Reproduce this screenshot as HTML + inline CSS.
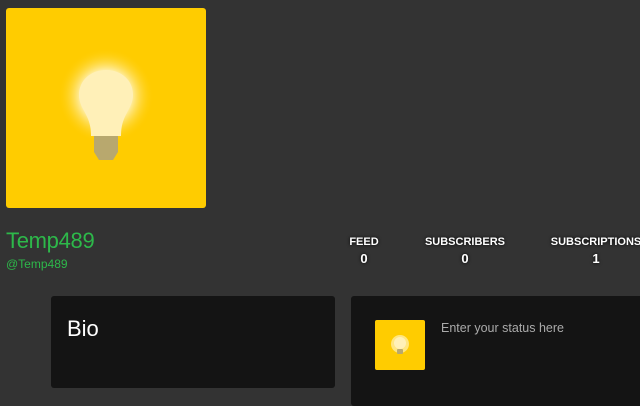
<!DOCTYPE html>
<html><head><style>
body{margin:0;width:640px;height:400px;background:#333;position:relative;overflow:hidden;font-family:"Liberation Sans",sans-serif}
.av{position:absolute;left:6px;top:8px;width:200px;height:200px;background:#ffcc00;border-radius:3px}
.name{position:absolute;left:6px;top:228px;font-size:22px;color:#2db84a;letter-spacing:-0.3px}
.handle{position:absolute;left:6px;top:257px;font-size:12px;color:#2db84a}
.st{position:absolute;top:236px;color:#fff;font-weight:bold;text-align:center;text-shadow:0 0 3px #000}
.st b{display:block;font-size:11px}
.st i{display:block;font-style:normal;font-size:13px;margin-top:3px}
.box{position:absolute;background:#141414;border-radius:3px}
</style></head><body>
<div class="av"><svg width="200" height="200">
<defs><radialGradient id="g"><stop offset="0.5" stop-color="#fff3c0"/><stop offset="1" stop-color="#ffcc00" stop-opacity="0"/></radialGradient></defs>
<circle cx="100" cy="88" r="48" fill="url(#g)"/>
<path d="M100 62c15 0 27 10 27 25c0 10-6 16-9 24c-2 5-3 10-3 17h-30c0-7-1-12-3-17c-3-8-9-14-9-24c0-15 12-25 27-25z" fill="#fff0b8"/>
<path d="M88 128h24v16l-5 8h-14l-5-8z" fill="#b8a86e"/>
</svg></div>
<div class="name">Temp489</div>
<div class="handle">@Temp489</div>
<div class="st" style="left:340px;width:48px"><b>FEED</b><i>0</i></div>
<div class="st" style="left:420px;width:90px"><b>SUBSCRIBERS</b><i>0</i></div>
<div class="st" style="left:548px;width:96px"><b>SUBSCRIPTIONS</b><i>1</i></div>
<div class="box" style="left:51px;top:296px;width:284px;height:92px"><div style="position:absolute;left:16px;top:20px;color:#fff;font-size:22px">Bio</div></div>
<div class="box" style="left:351px;top:296px;width:300px;height:110px">
<div style="position:absolute;left:24px;top:24px;width:50px;height:50px;background:#ffcc00;border-radius:2px"><svg width="50" height="50"><circle cx="25" cy="24" r="9" fill="#ffe680"/><circle cx="25" cy="23" r="6" fill="#fff0b8"/><rect x="22" y="29" width="6" height="5" rx="1" fill="#b8a86e"/></svg></div>
<div style="position:absolute;left:90px;top:25px;color:#aaa;font-size:12.5px">Enter your status here</div>
</div>
</body></html>
